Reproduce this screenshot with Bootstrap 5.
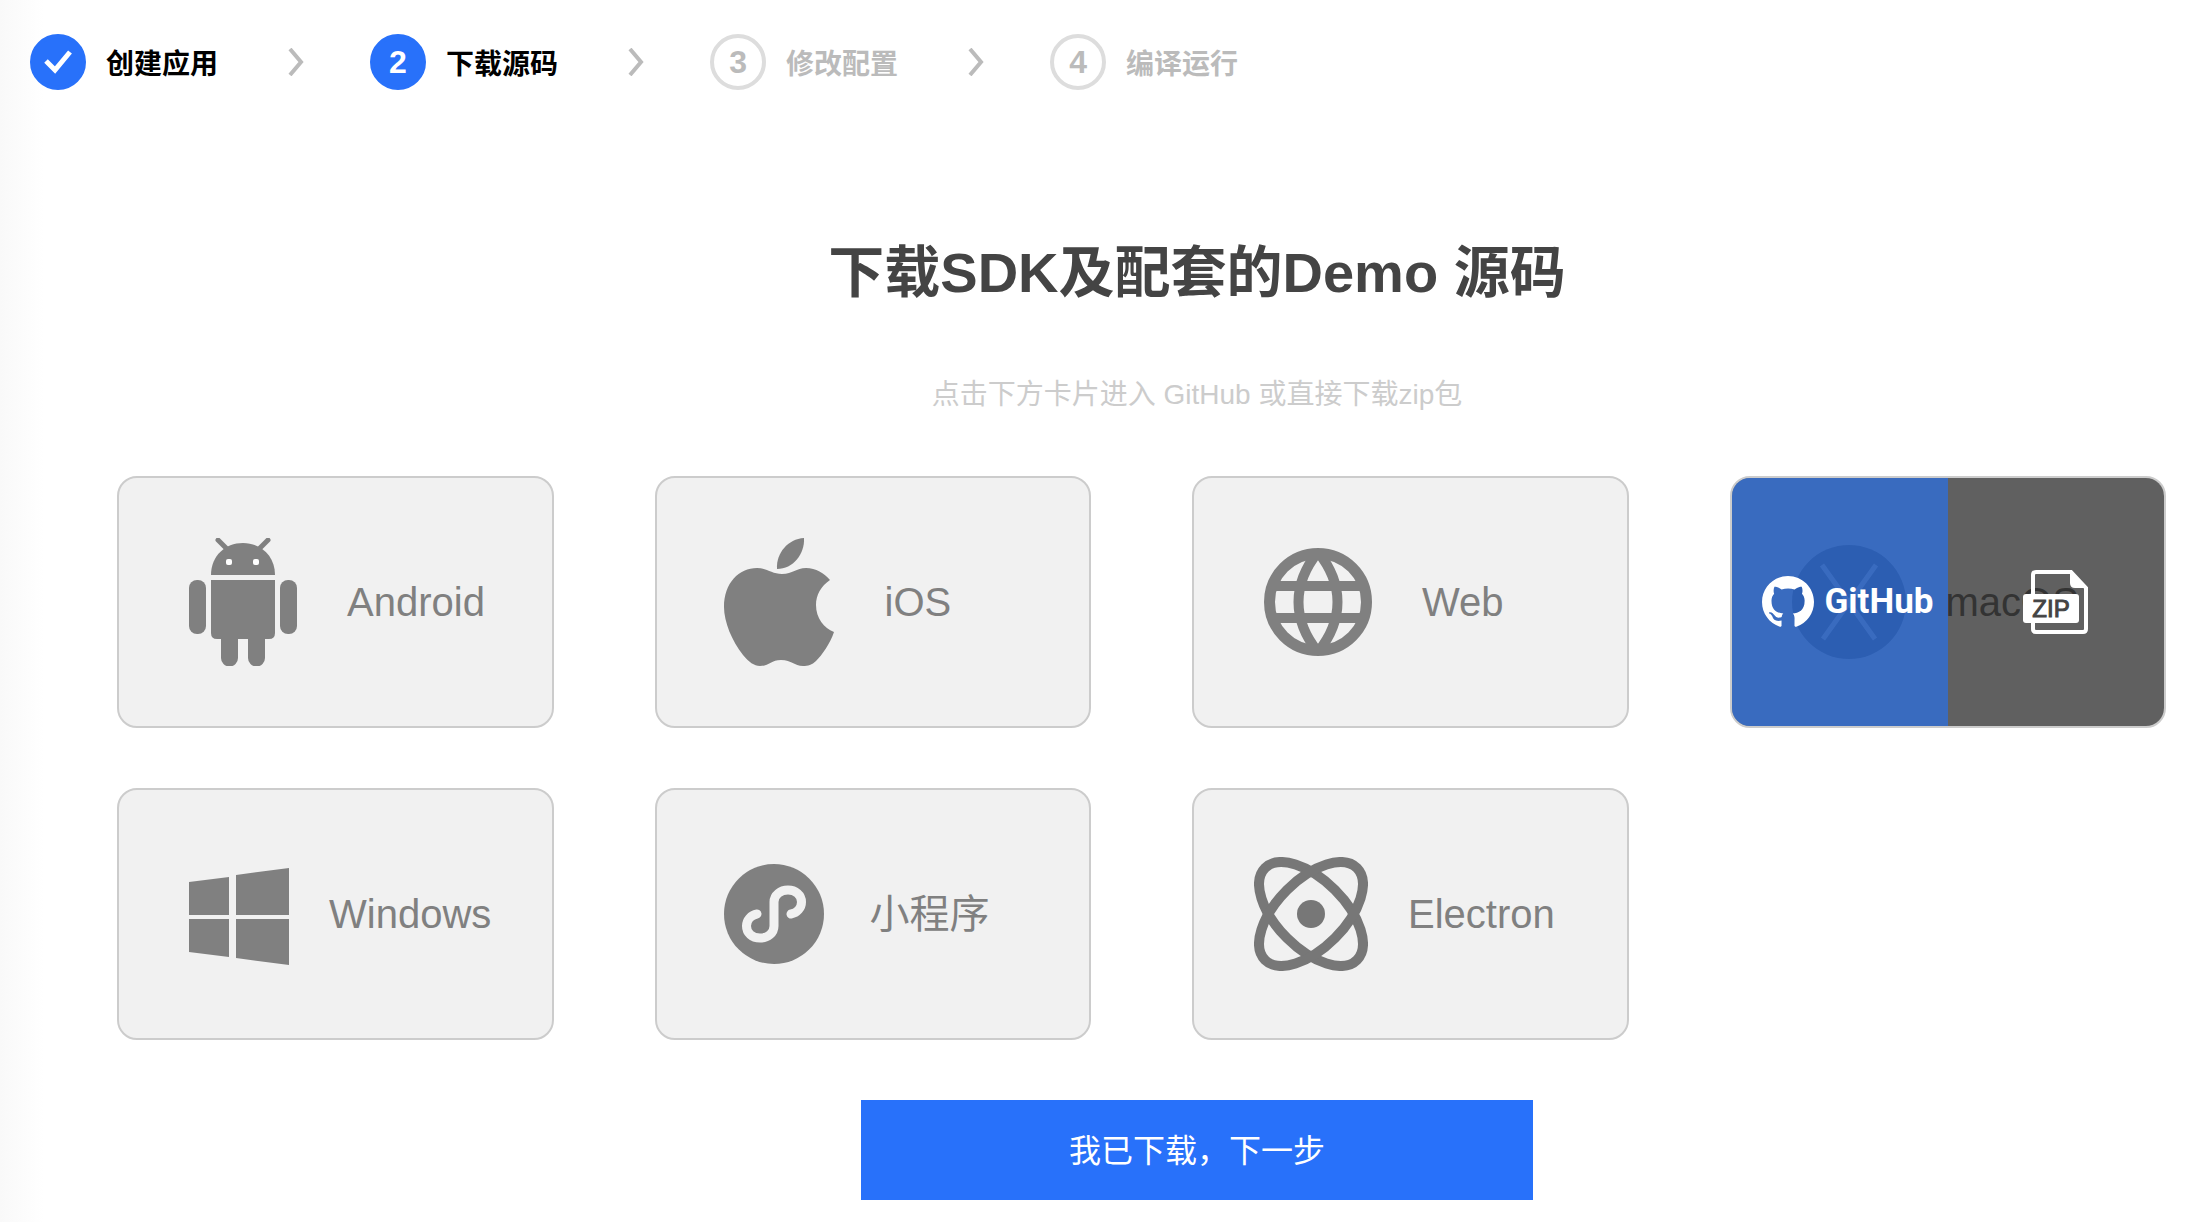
<!DOCTYPE html>
<html lang="zh-CN">
<head>
<meta charset="utf-8">
<meta name="viewport" content="width=device-width, initial-scale=1">
<title>下载源码</title>
<link href="https://cdn.jsdelivr.net/npm/bootstrap@5.3.0/dist/css/bootstrap.min.css" rel="stylesheet">
<style>
  body {
    font-family: "Liberation Sans", "Noto Sans CJK SC", sans-serif;
    background: linear-gradient(90deg, #f9f9f9, #fff 44px);
    color: #444;
  }
  .steps { padding: 34px 30px 0; row-gap: 16px; }
  .step { gap: 20px; font-size: 28px; font-weight: 700; color: #bbb; }
  .step-label { padding-top: 6px; line-height: 40px; }
  .step-num {
    width: 56px; height: 56px; border: 4px solid #ddd; border-radius: 50%;
    font-size: 32px; line-height: 48px;
  }
  .step-on { color: #000; }
  .step-on .step-num { background: #2871fa; border-color: #2871fa; color: #fff; }
  .step-arrow { margin: 0 66px 0 70px; }
  .intro, .actions { padding-left: 206px; }
  .intro { padding-top: 143px; }
  .intro-title { font-size: 56px; line-height: 80px; font-weight: 700; }
  .intro-text { font-size: 28px; line-height: 40px; margin-top: 62px; color: #ccc; }
  .tiles {
    display: grid; grid-template-columns: repeat(4, 1fr);
    gap: 60px 101px; padding: 61px 22px 0 117px;
  }
  .tile {
    height: 252px; padding-left: 70px; gap: 50px; border: 2px solid #ccc;
    border-radius: 20px; background: #f1f1f1; color: #808080;
    font-size: 40px; line-height: 60px;
  }
  .tile:hover { color: #808080; }
  .tile-tight { gap: 40px; }
  .tile-near { padding-left: 60px; }
  .tile-pick { background: rgba(0, 0, 0, .6); }
  .pick-git {
    gap: 11px; padding-left: 30px; background: rgba(42, 112, 232, .7);
    font: 700 35px/60px Roboto, sans-serif;
  }
  .btn-next {
    width: 672px; height: 100px; border: 0; border-radius: 0; background: #2871fa;
    color: #fff; font-size: 32px; padding-top: 8px;
  }
  .btn-next:hover { background: #1f63e0; color: #fff; }
  .actions { padding-top: 60px; padding-bottom: 22px; }
  @media (max-width: 1800px) {
    .tiles { grid-template-columns: repeat(auto-fill, minmax(400px, 1fr)); gap: 40px; padding: 62px 22px 0; }
    .intro, .actions { padding-left: 22px; padding-right: 22px; }
    .btn-next { width: 100%; max-width: 672px; }
  }
</style>
</head>
<body>
<header>
  <ol class="steps list-unstyled d-flex flex-wrap align-items-center mb-0">
    <li class="step step-on d-flex align-items-center">
      <span class="step-num d-flex align-items-center justify-content-center">
        <svg width="28" height="26" viewBox="0 0 28 26" fill="none" stroke="#fff" stroke-width="5" role="img" aria-label="已完成"><path d="M2 12l9 9L26 3"/></svg>
      </span>
      <span class="step-label">创建应用</span>
    </li>
    <li class="step-arrow d-flex" aria-hidden="true"><svg width="16" height="28" viewBox="0 0 16 28" fill="none" stroke="#bbb" stroke-width="4"><path d="M2 1l11 13L2 27"/></svg></li>
    <li class="step step-on d-flex align-items-center" aria-current="step">
      <span class="step-num text-center">2</span><span class="step-label">下载源码</span>
    </li>
    <li class="step-arrow d-flex" aria-hidden="true"><svg width="16" height="28" viewBox="0 0 16 28" fill="none" stroke="#bbb" stroke-width="4"><path d="M2 1l11 13L2 27"/></svg></li>
    <li class="step d-flex align-items-center">
      <span class="step-num text-center">3</span><span class="step-label">修改配置</span>
    </li>
    <li class="step-arrow d-flex" aria-hidden="true"><svg width="16" height="28" viewBox="0 0 16 28" fill="none" stroke="#bbb" stroke-width="4"><path d="M2 1l11 13L2 27"/></svg></li>
    <li class="step d-flex align-items-center">
      <span class="step-num text-center">4</span><span class="step-label">编译运行</span>
    </li>
  </ol>
</header>

<main>
  <section class="intro text-center">
    <h1 class="intro-title mb-0">下载SDK及配套的Demo 源码</h1>
    <p class="intro-text mb-0">点击下方卡片进入 GitHub 或直接下载zip包</p>
  </section>

  <section class="tiles">
    <a href="#android" class="tile d-flex align-items-center text-decoration-none">
      <svg class="flex-shrink-0" width="108" height="128" viewBox="0 0 108 128" fill="#808080" aria-hidden="true">
        <path d="M29 2l8 8M79 2l-8 8" stroke="#808080" stroke-width="5" stroke-linecap="round"/>
        <path d="M22 37C22 18 36 5 54 5s32 13 32 32z"/>
        <path d="M22 42h64v53q0 6-6 6H28q-6 0-6-6z"/>
        <rect y="42" width="17" height="54" rx="8"/><rect x="91" y="42" width="17" height="54" rx="8"/>
        <path d="M32 96h17v24a8 8 0 0 1-17 0zM59 96h17v24a8 8 0 0 1-17 0z"/>
        <rect x="37" y="21" width="6" height="6" rx="2" fill="#fff"/><rect x="64" y="21" width="6" height="6" rx="2" fill="#fff"/>
      </svg>
      <span>Android</span>
    </a>
    <a href="#ios" class="tile d-flex align-items-center text-decoration-none">
      <svg class="flex-shrink-0" width="108" height="128" viewBox="3 0 108 128" fill="#808080" overflow="visible" aria-hidden="true">
        <path d="M80 0C81 16 69 31 53 31C52 15 64 1 80 0z"/>
        <path d="M58 36C69 36 72 30 82 30C92 30 100 35 106 42C97 48 92 57 92 67C92 80 100 90 110 94C106 106 98 117 92 123C88 127 84 128 79 128C70 128 68 122 57 122C47 122 45 128 36 128C30 128 25 124 19 117C8 103 0 84 0 69C0 45 15 30 33 30C43 30 48 36 58 36z"/>
      </svg>
      <span>iOS</span>
    </a>
    <a href="#web" class="tile d-flex align-items-center text-decoration-none">
      <svg class="flex-shrink-0" width="108" height="108" viewBox="0 0 108 108" fill="none" stroke="#808080" stroke-width="10" aria-hidden="true">
        <circle cx="54" cy="54" r="48.5" stroke-width="11"/>
        <path d="M8 38h92M8 70h92M54 4C28 36 28 72 54 104M54 4C80 36 80 72 54 104"/>
      </svg>
      <span>Web</span>
    </a>
    <div class="tile tile-tight tile-near d-flex align-items-center position-relative overflow-hidden">
      <svg class="flex-shrink-0" width="114" height="114" viewBox="0 0 114 114" aria-hidden="true">
        <circle cx="57" cy="57" r="57" fill="#808080"/>
        <path d="M30 20l53 74M84 20L31 94" stroke="#f1f1f1" stroke-width="5"/>
      </svg>
      <span>macOS</span>
      <div class="tile-pick position-absolute top-0 start-0 w-100 h-100 d-flex">
        <a href="#macos-github" class="pick-git w-50 d-flex align-items-center text-white text-decoration-none">
          <svg class="flex-shrink-0" width="52" height="52" viewBox="0 0 16 16" fill="#fff" aria-hidden="true"><path d="M8 0C3.58 0 0 3.58 0 8c0 3.54 2.29 6.53 5.47 7.59.4.07.55-.17.55-.38 0-.19-.01-.82-.01-1.49-2.01.37-2.53-.49-2.69-.94-.09-.23-.48-.94-.82-1.13-.28-.15-.68-.52-.01-.53.63-.01 1.08.58 1.23.82.72 1.21 1.87.87 2.33.66.07-.52.28-.87.51-1.07-1.78-.2-3.64-.89-3.64-3.95 0-.87.31-1.59.82-2.15-.08-.2-.36-1.02.08-2.12 0 0 .67-.21 2.2.82.64-.18 1.32-.27 2-.27.68 0 1.36.09 2 .27 1.53-1.04 2.2-.82 2.2-.82.44 1.1.16 1.92.08 2.12.51.56.82 1.27.82 2.15 0 3.07-1.87 3.75-3.65 3.95.29.25.54.73.54 1.48 0 1.07-.01 1.93-.01 2.2 0 .21.15.46.55.38A8.01 8.01 0 0 0 16 8c0-4.42-3.58-8-8-8z"/></svg>
          <span>GitHub</span>
        </a>
        <a href="#macos-zip" class="w-50 d-flex align-items-center justify-content-center" aria-label="下载 zip 包">
          <svg width="66" height="64" viewBox="0 0 66 64" aria-hidden="true">
            <path d="M10 26V5q0-3 3-3h35l15 16v41q0 3-3 3H13q-3 0-3-3V50" fill="none" stroke="#fff" stroke-width="4"/>
            <path d="M47 0L65 18H52q-5 0-5-5z" fill="#fff"/>
            <rect y="24" width="56" height="29" rx="3" fill="#fff"/>
            <text x="28" y="47" text-anchor="middle" font-family="Liberation Sans, sans-serif" font-size="24" fill="#444" stroke="#444">ZIP</text>
          </svg>
        </a>
      </div>
    </div>
    <a href="#windows" class="tile tile-tight d-flex align-items-center text-decoration-none">
      <svg class="flex-shrink-0" width="100" height="101" viewBox="0 -4 100 101" fill="#808080" aria-hidden="true">
        <path d="M0 14L40 9V47H0zM47 7L100 0V47H47zM0 51H40V89L0 84zM47 51H100V97L47 90z"/>
      </svg>
      <span>Windows</span>
    </a>
    <a href="#miniprogram" class="tile tile-tight d-flex align-items-center text-decoration-none">
      <svg class="flex-shrink-0" width="103" height="100" viewBox="3 0 103 100" overflow="visible" aria-hidden="true">
        <circle cx="50" cy="50" r="50" fill="#808080"/>
        <path d="M67 50C73 49 77.500 44 77.500 38C77.500 31 71.500 26 64 26S50 31 50 38V62C50 69 44 74 36 74S22.500 69 22.500 62C22.500 56 27 51 33 50" fill="none" stroke="#f1f1f1" stroke-width="9" stroke-linecap="round"/>
      </svg>
      <span>小程序</span>
    </a>
    <a href="#electron" class="tile tile-tight tile-near d-flex align-items-center text-decoration-none">
      <svg class="flex-shrink-0" width="114" height="114" viewBox="0 0 114 114" fill="none" stroke="#777" stroke-width="10" aria-hidden="true">
        <ellipse cx="57" cy="57" rx="65" ry="34" transform="rotate(45 57 57)"/>
        <ellipse cx="57" cy="57" rx="65" ry="34" transform="rotate(-45 57 57)"/>
        <circle cx="57" cy="57" r="14" fill="#777" stroke="none"/>
      </svg>
      <span>Electron</span>
    </a>
  </section>

  <div class="actions text-center">
    <button type="button" class="btn btn-next">我已下载，下一步</button>
  </div>
</main>
<script src="https://cdn.jsdelivr.net/npm/bootstrap@5.3.0/dist/js/bootstrap.bundle.min.js"></script>
</body>
</html>
